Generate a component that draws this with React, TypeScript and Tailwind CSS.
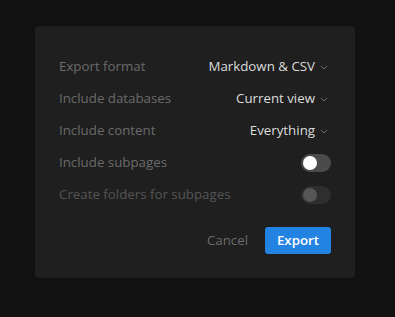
import React from "react";

function Chevron() {
  return (
    <svg width="8" height="5" viewBox="0 0 8 5" className="ml-[5px] mt-[1px]">
      <path d="M1 1 L4 4 L7 1" fill="none" stroke="#6f6f6f" strokeWidth="1" />
    </svg>
  );
}

function Toggle({ disabled }: { disabled?: boolean }) {
  return (
    <div
      className={`flex h-[18px] w-[30px] items-center rounded-full px-[2px] ${
        disabled ? "bg-[#2e2e2e]" : "bg-[#4b4b4b]"
      }`}
    >
      <div className={`h-[14px] w-[14px] rounded-full ${disabled ? "bg-[#565656]" : "bg-white"}`} />
    </div>
  );
}

const selects = [
  { label: "Export format", value: "Markdown & CSV" },
  { label: "Include databases", value: "Current view" },
  { label: "Include content", value: "Everything" },
];

export default function App() {
  return (
    <div
      className="h-[317px] w-[395px] bg-[#111111] pl-[35px] pt-[26px]"
      style={{ fontFamily: "'Open Sans', 'Noto Sans', sans-serif" }}
    >
      <div className="flex h-[252px] w-[320px] flex-col rounded-[4px] bg-[#1f1f1f] px-6 pt-[25px] text-[13.3px]">
        {selects.map((s) => (
          <div key={s.label} className="flex h-8 items-center justify-between">
            <span className="text-[#6b6b6b]">{s.label}</span>
            <span className="mr-[3px] flex items-center text-[#dcdcdc]">
              {s.value}
              <Chevron />
            </span>
          </div>
        ))}
        <div className="flex h-8 items-center justify-between">
          <span className="text-[#6b6b6b]">Include subpages</span>
          <Toggle />
        </div>
        <div className="flex h-8 items-center justify-between">
          <span className="text-[#555555]">Create folders for subpages</span>
          <Toggle disabled />
        </div>
        <div className="mt-[16px] flex items-center justify-end gap-[17px]">
          <button className="text-[#6b6b6b]">Cancel</button>
          <button className="h-[27px] w-[66px] rounded-[3px] bg-[#2383e2] font-semibold text-white">
            Export
          </button>
        </div>
      </div>
    </div>
  );
}
